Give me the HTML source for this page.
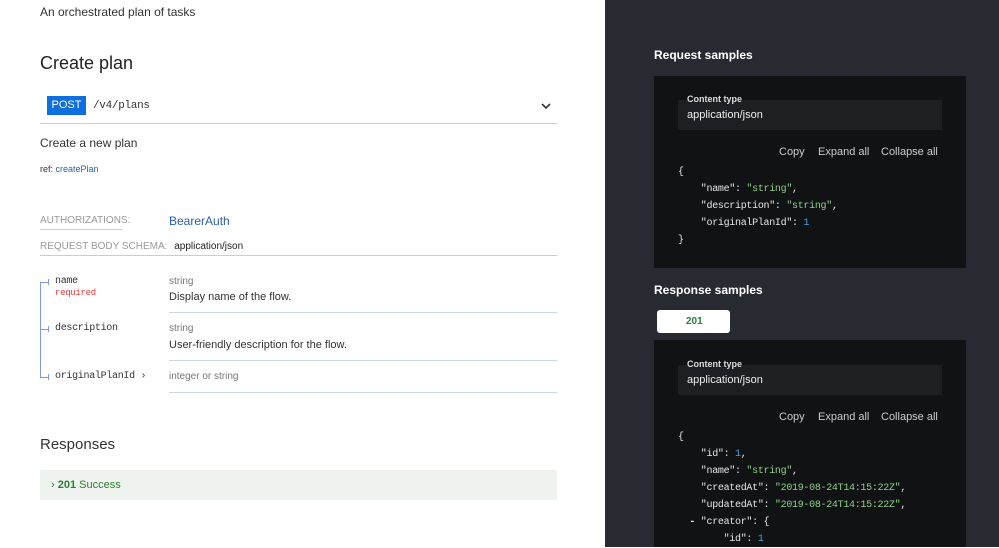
<!DOCTYPE html>
<html><head><meta charset="utf-8"><style>
*{margin:0;padding:0;box-sizing:border-box}
body{width:999px;height:547px;overflow:hidden;background:#fff;font-family:"Liberation Sans",sans-serif;position:relative;color:#333}
.a{position:absolute;white-space:nowrap;line-height:1}
.m{font-family:"Liberation Mono",monospace;letter-spacing:-0.3px}
.ln{position:absolute;height:1px}
.s{color:#8fcf8a}.n{color:#4aa3d8}
.w{color:#e6e6e6}
</style></head><body>
<div class="a" style="left:40px;top:6px;font-size:12px;color:#333">An orchestrated plan of tasks</div>
<div class="a" style="left:40px;top:54px;font-size:18px;color:#222">Create plan</div>
<div class="a" style="left:47px;top:96px;width:39px;height:19px;background:#0f6fde;color:#fff;font-size:11px;display:flex;align-items:center;justify-content:center">POST</div>
<div class="a m" style="left:93px;top:101px;font-size:11px;color:#333">/v4/plans</div>
<svg class="a" style="left:540px;top:101px" width="12" height="10"><path d="M2 3l4 4 4-4" stroke="#333" stroke-width="1.6" fill="none"/></svg>
<div class="ln" style="left:40px;top:123px;width:517px;background:#ccc"></div>
<div class="a" style="left:40px;top:137px;font-size:12px">Create a new plan</div>
<div class="a" style="left:40px;top:165px;font-size:9px">ref: <span style="color:#2a5db0">createPlan</span></div>
<div class="a" style="left:40px;top:216px;font-size:10px;color:#999">AUTHORIZATIONS:</div>
<div class="ln" style="left:40px;top:229px;width:82px;background:#ccc"></div>
<div class="a" style="left:169px;top:215px;font-size:12px;color:#2a5db0">BearerAuth</div>
<div class="a" style="left:40px;top:242px;font-size:10px;color:#999">REQUEST BODY SCHEMA: <span style="color:#222;margin-left:4px">application/json</span></div>
<div class="ln" style="left:40px;top:255px;width:517px;background:#ccc"></div>
<div class="a" style="left:40px;top:282px;width:1px;height:96px;background:#7c9be0"></div>
<div class="a" style="left:40px;top:282px;width:9px;height:1px;background:#7c9be0"></div>
<div class="a" style="left:48px;top:279px;width:1px;height:6px;background:#7c9be0"></div>
<div class="a" style="left:40px;top:329px;width:9px;height:1px;background:#7c9be0"></div>
<div class="a" style="left:48px;top:326px;width:1px;height:6px;background:#7c9be0"></div>
<div class="a" style="left:40px;top:377px;width:9px;height:1px;background:#7c9be0"></div>
<div class="a" style="left:48px;top:374px;width:1px;height:6px;background:#7c9be0"></div>
<div class="a m" style="left:55px;top:277px;font-size:10px;color:#333">name</div>
<div class="a m" style="left:55px;top:289px;font-size:9px;color:#e53935">required</div>
<div class="a" style="left:169px;top:277px;font-size:10px;color:#777">string</div>
<div class="a" style="left:169px;top:292px;font-size:11px">Display name of the flow.</div>
<div class="ln" style="left:169px;top:312px;width:388px;background:#cdd6de"></div>
<div class="a m" style="left:55px;top:324px;font-size:10px">description</div>
<div class="a" style="left:169px;top:324px;font-size:10px;color:#777">string</div>
<div class="a" style="left:169px;top:340px;font-size:11px">User-friendly description for the flow.</div>
<div class="ln" style="left:169px;top:360px;width:388px;background:#cdd6de"></div>
<div class="a m" style="left:55px;top:372px;font-size:10px">originalPlanId ›</div>
<div class="a" style="left:169px;top:372px;font-size:10px;color:#777">integer or string</div>
<div class="ln" style="left:169px;top:392px;width:388px;background:#cdd6de"></div>
<div class="a" style="left:40px;top:437px;font-size:15px;color:#333">Responses</div>
<div class="a" style="left:40px;top:470px;width:517px;height:30px;background:#eef3ef"></div>
<div class="a" style="left:51px;top:480px;font-size:11px;color:#2e7d32">›&nbsp;<b>201</b> Success</div>

<div class="a" style="left:605px;top:0;width:394px;height:547px;background:#272a30"></div>
<div class="a" style="left:654px;top:49px;font-size:12px;font-weight:bold;color:#fff">Request samples</div>
<div class="a" style="left:654px;top:76px;width:312px;height:192px;background:#111214"></div>
<div class="a" style="left:678px;top:100px;width:264px;height:30px;background:#1e1f22"></div>
<div class="a" style="left:687px;top:95px;font-size:9px;font-weight:bold;color:#ddd">Content type</div>
<div class="a" style="left:687px;top:110px;font-size:11px;color:#eee">application/json</div>
<div class="a" style="left:779px;top:147px;font-size:11px;color:#ccc">Copy</div>
<div class="a" style="left:818px;top:147px;font-size:11px;color:#ccc">Expand all</div>
<div class="a" style="left:881px;top:147px;font-size:11px;color:#ccc">Collapse all</div>
<div class="a m w" style="left:678px;top:164px;font-size:10px;line-height:17px">{<br>&nbsp;&nbsp;&nbsp;&nbsp;"name": <span class="s">"string"</span>,<br>&nbsp;&nbsp;&nbsp;&nbsp;"description": <span class="s">"string"</span>,<br>&nbsp;&nbsp;&nbsp;&nbsp;"originalPlanId": <span class="n">1</span><br>}</div>
<div class="a" style="left:654px;top:284px;font-size:12px;font-weight:bold;color:#fff">Response samples</div>
<div class="a" style="left:657px;top:310px;width:73px;height:23px;background:#fff;border-radius:3px"></div>
<div class="a" style="left:686px;top:317px;font-size:10px;font-weight:bold;color:#2e7d32">201</div>
<div class="a" style="left:654px;top:340px;width:312px;height:207px;background:#111214"></div>
<div class="a" style="left:678px;top:365px;width:264px;height:30px;background:#1e1f22"></div>
<div class="a" style="left:687px;top:360px;font-size:9px;font-weight:bold;color:#ddd">Content type</div>
<div class="a" style="left:687px;top:375px;font-size:11px;color:#eee">application/json</div>
<div class="a" style="left:779px;top:412px;font-size:11px;color:#ccc">Copy</div>
<div class="a" style="left:818px;top:412px;font-size:11px;color:#ccc">Expand all</div>
<div class="a" style="left:881px;top:412px;font-size:11px;color:#ccc">Collapse all</div>
<div class="a m w" style="left:678px;top:429px;font-size:10px;line-height:17px">{<br>&nbsp;&nbsp;&nbsp;&nbsp;"id": <span class="n">1</span>,<br>&nbsp;&nbsp;&nbsp;&nbsp;"name": <span class="s">"string"</span>,<br>&nbsp;&nbsp;&nbsp;&nbsp;"createdAt": <span class="s">"2019-08-24T14:15:22Z"</span>,<br>&nbsp;&nbsp;&nbsp;&nbsp;"updatedAt": <span class="s">"2019-08-24T14:15:22Z"</span>,<br>&nbsp;&nbsp;<b>-</b>&nbsp;"creator": {<br>&nbsp;&nbsp;&nbsp;&nbsp;&nbsp;&nbsp;&nbsp;&nbsp;"id": <span class="n">1</span></div>
</body></html>
